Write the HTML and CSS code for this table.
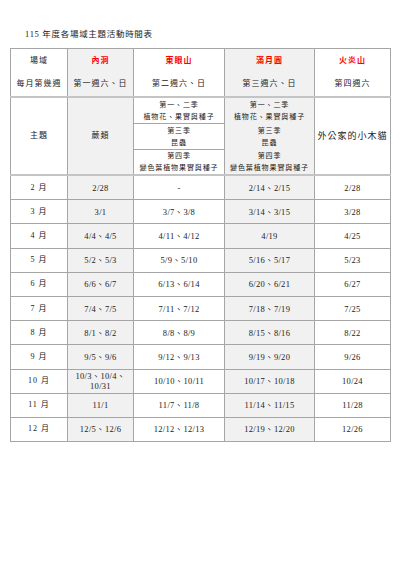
FILE: index.html
```html
<!DOCTYPE html>
<html lang="zh-Hant">
<head>
<meta charset="utf-8">
<title>115 年度各場域主題活動時間表</title>
<link rel="stylesheet" href="styles.css">
</head>
<body>
<div class="page">
  <div class="title">115 年度各場域主題活動時間表</div>
  <table class="sched">
    <colgroup>
      <col class="c1"><col class="c2"><col class="c3"><col class="c4"><col class="c5">
    </colgroup>
    <tr class="head">
      <td><div class="l1">場域</div><div class="l2">每月第幾週</div></td>
      <td class="shade"><div class="l1 red">內洞</div><div class="l2">第一週六、日</div></td>
      <td><div class="l1 red">東眼山</div><div class="l2">第二週六、日</div></td>
      <td class="shade"><div class="l1 red">滿月圓</div><div class="l2">第三週六、日</div></td>
      <td><div class="l1 red">火炎山</div><div class="l2">第四週六</div></td>
    </tr>
    <tr class="theme">
      <td>主題</td>
      <td class="shade">蕨類</td>
      <td class="split">
        <div class="sub s1"><span>第一、二季</span><span>植物花、果實與種子</span></div>
        <div class="sub s2"><span>第三季</span><span>昆蟲</span></div>
        <div class="sub s3"><span>第四季</span><span>變色葉植物果實與種子</span></div>
      </td>
      <td class="shade split">
        <div class="sub plain s1"><span>第一、二季</span><span>植物花、果實與種子</span></div>
        <div class="sub plain s2"><span>第三季</span><span>昆蟲</span></div>
        <div class="sub plain s3"><span>第四季</span><span>變色葉植物果實與種子</span></div>
      </td>
      <td class="big">外公家的小木貓</td>
    </tr>
    <tr class="m"><td>2 月</td><td class="shade">2/28</td><td>-</td><td class="shade">2/14、2/15</td><td>2/28</td></tr>
    <tr class="m"><td>3 月</td><td class="shade">3/1</td><td>3/7、3/8</td><td class="shade">3/14、3/15</td><td>3/28</td></tr>
    <tr class="m"><td>4 月</td><td class="shade">4/4、4/5</td><td>4/11、4/12</td><td class="shade">4/19</td><td>4/25</td></tr>
    <tr class="m"><td>5 月</td><td class="shade">5/2、5/3</td><td>5/9、5/10</td><td class="shade">5/16、5/17</td><td>5/23</td></tr>
    <tr class="m"><td>6 月</td><td class="shade">6/6、6/7</td><td>6/13、6/14</td><td class="shade">6/20、6/21</td><td>6/27</td></tr>
    <tr class="m"><td>7 月</td><td class="shade">7/4、7/5</td><td>7/11、7/12</td><td class="shade">7/18、7/19</td><td>7/25</td></tr>
    <tr class="m"><td>8 月</td><td class="shade">8/1、8/2</td><td>8/8、8/9</td><td class="shade">8/15、8/16</td><td>8/22</td></tr>
    <tr class="m"><td>9 月</td><td class="shade">9/5、9/6</td><td>9/12、9/13</td><td class="shade">9/19、9/20</td><td>9/26</td></tr>
    <tr class="m"><td>10 月</td><td class="shade two">10/3、10/4、<br>10/31</td><td>10/10、10/11</td><td class="shade">10/17、10/18</td><td>10/24</td></tr>
    <tr class="m"><td>11 月</td><td class="shade">11/1</td><td>11/7、11/8</td><td class="shade">11/14、11/15</td><td>11/28</td></tr>
    <tr class="m"><td>12 月</td><td class="shade">12/5、12/6</td><td>12/12、12/13</td><td class="shade">12/19、12/20</td><td>12/26</td></tr>
  </table>
</div>
</body>
</html>
```
FILE: styles.css
```css
html, body {
  margin: 0;
  padding: 0;
  background: #ffffff;
}
body {
  font-family: "Liberation Serif", "Noto Sans CJK TC", serif;
  color: #222222;
  width: 400px;
  height: 565px;
}
.page {
  padding: 28px 10px 0 10px;
}
.title {
  font-size: 8.5px;
  line-height: 12px;
  padding-left: 15px;
  letter-spacing: 0.7px;
  height: 20px;
}
.sched {
  border-collapse: collapse;
  table-layout: fixed;
  width: 380px;
}
.c1 { width: 57px; }
.c2 { width: 66px; }
.c3 { width: 91px; }
.c4 { width: 90px; }
.c5 { width: 76px; }
.sched td {
  border: 1px solid #a6a6a6;
  text-align: center;
  vertical-align: middle;
  padding: 0;
  font-size: 8.5px;
  line-height: 10px;
  letter-spacing: 0.3px;
}
.sched td.shade {
  background: #f1f1f1;
}
.head td {
  height: 47px;
  border-bottom: 2px solid #c4c4c4;
  font-size: 8px;
  letter-spacing: 1px;
}
.head .l1 {
  line-height: 12px;
  margin-bottom: 11px;
}
.head .l2 {
  line-height: 12px;
}
.red {
  color: #ff0000;
  font-weight: bold;
}
.theme td {
  height: 74px;
  border-bottom: 2px solid #c4c4c4;
  font-size: 8px;
  letter-spacing: 1px;
}
.theme td.big {
  font-size: 9px;
}
.theme td.split {
  vertical-align: top;
}
.sub {
  display: flex;
  flex-direction: column;
  justify-content: center;
  height: 25px;
  font-size: 7px;
  line-height: 12px;
  letter-spacing: 0.9px;
}
.sub.s2, .sub.s3 {
  border-top: 1px solid #a6a6a6;
}
.sub.s3 {
  height: 24px;
}
.sub.plain.s2, .sub.plain.s3 {
  border-top-color: #f1f1f1;
}
.m td {
  height: 23.2px;
}
.m td:first-child {
  font-size: 8px;
  letter-spacing: 1px;
}
.m td.two {
  line-height: 10px;
}
```
